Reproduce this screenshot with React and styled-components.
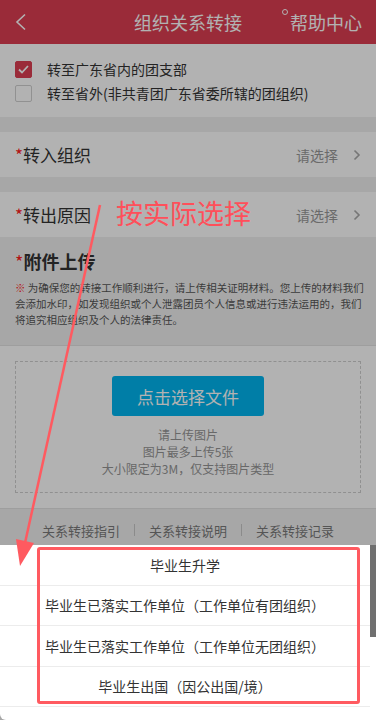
import React from "react";
import styled, { createGlobalStyle } from "styled-components";

const GlobalStyle = createGlobalStyle`
  html, body {
    margin: 0;
    padding: 0;
    background: #f0f0f0;
    font-family: "Noto Sans CJK SC", "Noto Sans", sans-serif;
  }
  * { box-sizing: border-box; }
`;

const Page = styled.div`
  position: relative;
  width: 376px;
  height: 720px;
  overflow: hidden;
  background: #f0f0f0;
`;

const Header = styled.div`
  position: relative;
  height: 44px;
  background: #dd3e52;
  display: flex;
  align-items: center;
  justify-content: center;
  color: #fff;
`;

const Back = styled.svg`
  position: absolute;
  left: 14px;
  top: 13px;
`;

const Title = styled.div`
  font-size: 18px;
  line-height: 24px;
`;

const Help = styled.div`
  position: absolute;
  right: 14px;
  top: 10px;
  font-size: 18px;
  line-height: 24px;
  display: flex;
  align-items: flex-start;
  gap: 2px;
`;

const Ring = styled.span`
  width: 6px;
  height: 6px;
  margin-top: -1px;
  border: 1px solid #fff;
  border-radius: 50%;
`;

const Block = styled.div`
  background: #fff;
  padding: ${({ pad }) => pad || "0"};
`;

const CheckRow = styled.div`
  display: flex;
  align-items: center;
  height: 24px;
  padding-left: 15px;
  font-size: 14px;
  color: #333;
`;

const Box = styled.span`
  width: 17px;
  height: 17px;
  border-radius: 2px;
  margin-right: 15px;
  display: flex;
  align-items: center;
  justify-content: center;
  background: ${({ checked }) => (checked ? "#dd3e52" : "#fff")};
  border: 1px solid ${({ checked }) => (checked ? "#dd3e52" : "#d0d0d0")};
`;

const Gap = styled.div`
  height: 15px;
`;

const FieldRow = styled.div`
  height: 45px;
  background: #fff;
  display: flex;
  align-items: center;
  padding: 0 15px;
`;

const Star = styled.span`
  color: #ff2020;
  font-size: ${({ size }) => size || "17px"};
  font-weight: 400;
`;

const Label = styled.div`
  flex: 1;
  font-size: 17px;
  color: #333;
`;

const Pick = styled.span`
  font-size: 14px;
  color: #999;
  margin-right: 15px;
`;

const Attach = styled.div`
  padding: 12px 15px 0;
`;

const AttachTitle = styled.div`
  font-size: 18px;
  font-weight: 700;
  line-height: 24px;
  color: #333;
`;

const Notice = styled.div`
  margin-top: 7px;
  font-size: 10.5px;
  line-height: 16px;
  color: #555;
  white-space: nowrap;
`;

const Mark = styled.span`
  color: #ff2020;
`;

const Upload = styled.div`
  margin-top: 17px;
  background: #fff;
  border-top: 1px solid #e2e2e2;
  border-bottom: 1px solid #e2e2e2;
  padding: 15px 15px;
`;

const Dashed = styled.div`
  border: 1px dashed #cfcfcf;
  padding: 14px 0 15px;
  display: flex;
  flex-direction: column;
  align-items: center;
`;

const PickButton = styled.div`
  width: 152px;
  height: 40px;
  border-radius: 3px;
  background: #00b5ef;
  color: #fff;
  font-size: 17px;
  display: flex;
  align-items: center;
  justify-content: center;
`;

const Hints = styled.div`
  margin-top: 10px;
  font-size: 12px;
  line-height: 17px;
  color: #959595;
  text-align: center;
`;

const Links = styled.div`
  height: 42px;
  display: flex;
  align-items: center;
  justify-content: center;
  gap: 14px;
  font-size: 13px;
  color: #7a7a7a;
`;

const Sep = styled.span`
  width: 1px;
  height: 12px;
  background: #c8c8c8;
`;

const Mask = styled.div`
  position: absolute;
  inset: 0;
  background: rgba(0, 0, 0, 0.3);
`;

const Sheet = styled.div`
  position: absolute;
  left: 0;
  right: 0;
  top: 545px;
  bottom: 0;
  background: #fff;
  overflow: hidden;
  border-bottom-left-radius: 6px;
`;

const Option = styled.div`
  height: 40.5px;
  margin-right: 6px;
  border-bottom: 1px solid #ececec;
  display: flex;
  align-items: center;
  justify-content: center;
  font-size: 14px;
  color: #333;
`;

const Scrollbar = styled.div`
  position: absolute;
  right: 0;
  top: 0;
  width: 6px;
  height: 92px;
  background: #707070;
`;

const Frame = styled.div`
  position: absolute;
  left: 37px;
  top: 547px;
  width: 323px;
  height: 157px;
  border: 3px solid #ff5a60;
  border-radius: 3px;
`;

const Note = styled.div`
  position: absolute;
  left: 116px;
  top: 195px;
  font-size: 27px;
  line-height: 36px;
  color: #ff4f5a;
`;

const Arrow = styled.svg`
  position: absolute;
  left: 0;
  top: 0;
`;

function Chevron() {
  return (
    <svg width="8" height="12" viewBox="0 0 8 12">
      <polyline points="1.5,1.5 6,6 1.5,10.5" fill="none" stroke="#aaa" strokeWidth="1.6" />
    </svg>
  );
}

const options = [
  "毕业生升学",
  "毕业生已落实工作单位（工作单位有团组织）",
  "毕业生已落实工作单位（工作单位无团组织）",
  "毕业生出国（因公出国/境）",
  "",
];

export default function App() {
  return (
    <Page>
      <GlobalStyle />
      <Header>
        <Back width="14" height="18" viewBox="0 0 14 18">
          <polyline points="11,1.5 3,9 11,16.5" fill="none" stroke="#fff" strokeWidth="1.6" />
        </Back>
        <Title>组织关系转接</Title>
        <Help>
          <Ring />
          帮助中心
        </Help>
      </Header>

      <Block pad="13px 0 12px">
        <CheckRow>
          <Box checked>
            <svg width="11" height="9" viewBox="0 0 11 9">
              <polyline points="1,4.5 4,7.5 10,1" fill="none" stroke="#fff" strokeWidth="1.8" />
            </svg>
          </Box>
          转至广东省内的团支部
        </CheckRow>
        <CheckRow>
          <Box />
          转至省外(非共青团广东省委所辖的团组织)
        </CheckRow>
      </Block>
      <Gap />
      <FieldRow>
        <Label>
          <Star>*</Star>转入组织
        </Label>
        <Pick>请选择</Pick>
        <Chevron />
      </FieldRow>
      <Gap />
      <FieldRow>
        <Label>
          <Star>*</Star>转出原因
        </Label>
        <Pick>请选择</Pick>
        <Chevron />
      </FieldRow>

      <Attach>
        <AttachTitle>
          <Star size="18px">*</Star>附件上传
        </AttachTitle>
        <Notice>
          <Mark>※</Mark> 为确保您的转接工作顺利进行，请上传相关证明材料。您上传的材料我们
          <br />
          会添加水印，如发现组织或个人泄露团员个人信息或进行违法运用的，我们
          <br />
          将追究相应组织及个人的法律责任。
        </Notice>
      </Attach>

      <Upload>
        <Dashed>
          <PickButton>点击选择文件</PickButton>
          <Hints>
            请上传图片
            <br />
            图片最多上传5张
            <br />
            大小限定为3M，仅支持图片类型
          </Hints>
        </Dashed>
      </Upload>

      <Links>
        <span>关系转接指引</span>
        <Sep />
        <span>关系转接说明</span>
        <Sep />
        <span>关系转接记录</span>
      </Links>

      <Mask />

      <Sheet>
        {options.map((o, i) => (
          <Option key={i}>{o}</Option>
        ))}
        <Scrollbar />
      </Sheet>

      <Frame />
      <Note>按实际选择</Note>
      <Arrow width="376" height="720" viewBox="0 0 376 720">
        <line x1="100" y1="205" x2="25" y2="543" stroke="#ff5a60" strokeWidth="2.5" />
        <polygon points="20,566 34,543 16,539" fill="#ff5a60" />
      </Arrow>
    </Page>
  );
}
